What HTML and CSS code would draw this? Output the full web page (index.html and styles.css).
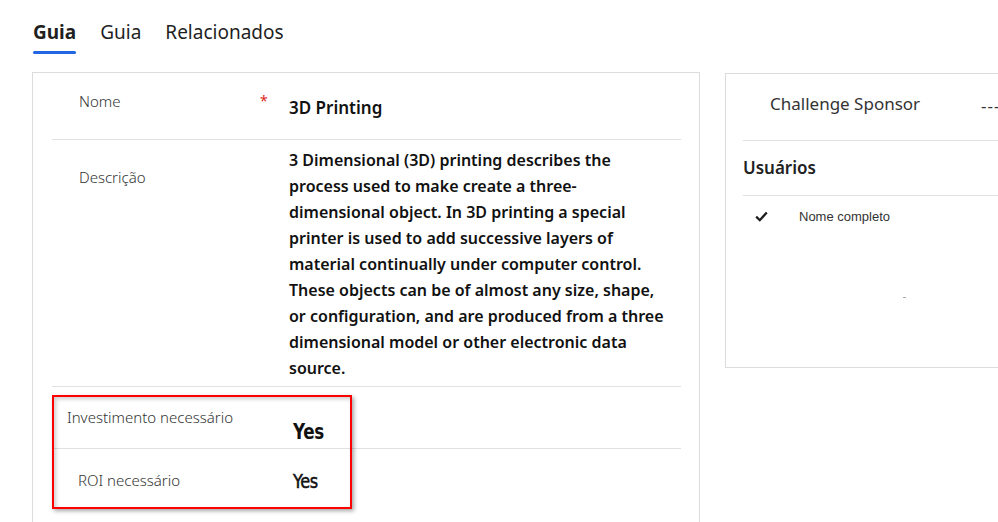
FILE: index.html
```html
<!DOCTYPE html>
<html lang="pt">
<head>
<meta charset="utf-8">
<title>Guia</title>
<link rel="stylesheet" href="styles.css">
</head>
<body>
<nav class="tabs">
  <a class="tab active">Guia</a>
  <a class="tab">Guia</a>
  <a class="tab">Relacionados</a>
</nav>
<main class="content">
  <section class="card main-card">
    <div class="row row-name">
      <div class="label">Nome</div>
      <div class="req">*</div>
      <div class="value name-value">3D Printing</div>
    </div>
    <div class="row row-desc">
      <div class="label desc-label">Descrição</div>
      <div class="req"></div>
      <div class="value desc-value">3 Dimensional (3D) printing describes the process used to make create a three-dimensional object. In 3D printing a special printer is used to add successive layers of material continually under computer control. These objects can be of almost any size, shape, or configuration, and are produced from a three dimensional model or other electronic data source.</div>
    </div>
    <div class="highlight-wrap">
      <div class="row row-inv">
        <div class="label label-inv">Investimento necessário</div>
        <div class="yes yes-bold">Yes</div>
      </div>
      <div class="row row-roi">
        <div class="label label-roi">ROI necessário</div>
        <div class="yes yes-med">Yes</div>
      </div>
      <div class="highlight"></div>
    </div>
  </section>
  <section class="card side-card">
    <div class="side-row sponsor">
      <div class="sponsor-label">Challenge Sponsor</div>
      <div class="sponsor-value">---</div>
    </div>
    <div class="side-row users-head">Usuários</div>
    <div class="users-list">
      <div class="user-col">
        <svg class="check" width="13" height="11" viewBox="0 0 13 11"><path d="M1.2 5.6 L4.8 9.2 L11.8 1.4" fill="none" stroke="#1b1b1b" stroke-width="2.2"/></svg>
        <span class="col-name">Nome completo</span>
      </div>
      <div class="dot"></div>
    </div>
  </section>
</main>
</body>
</html>
```

FILE: styles.css
```css
* { box-sizing: border-box; }
html, body { margin: 0; padding: 0; }
body {
  width: 998px;
  height: 522px;
  overflow: hidden;
  background: #fff;
  color: #1b1b1b;
  font-family: "Noto Sans", "Open Sans", sans-serif;
}
.tabs {
  display: flex;
  gap: 24px;
  padding: 18px 0 0 33px;
  height: 72px;
}
.tab {
  font-size: 19px;
  line-height: 28px;
  color: #1f1f1f;
  height: 36px;
  position: relative;
}
.tab.active { font-weight: 700; }
.tab.active::after {
  content: "";
  position: absolute;
  left: 0;
  right: 0;
  bottom: 0;
  height: 3px;
  border-radius: 2px;
  background: #2266e3;
}
.content {
  display: flex;
  align-items: flex-start;
  gap: 25px;
  padding-left: 32px;
}
.card {
  border: 1px solid #dcdcdc;
  background: #fff;
}
.main-card {
  width: 668px;
  height: 460px;
  flex: none;
  padding: 0 18px 0 19px;
}
.row {
  display: flex;
  border-bottom: 1px solid #e1e1e1;
}
.label {
  width: 208px;
  flex: none;
  padding-left: 27px;
  font-size: 15px;
  color: #333;
  font-weight: 300;
}
.req {
  width: 29px;
  flex: none;
  color: #e0281b;
  font-size: 14px;
}
.value { font-weight: 600; color: #111; }
.row-name { height: 67px; }
.row-name .label { padding-top: 18px; }
.row-name .req { padding-top: 18px; }
.name-value { font-size: 17px; padding-top: 23px; }
.row-desc { height: 247px; }
.desc-label { padding-top: 27px; }
.desc-value {
  width: 378px;
  flex: none;
  font-size: 16px;
  line-height: 26px;
  padding-top: 7px;
}
.highlight-wrap { position: relative; }
.row-inv { height: 62px; }
.label-inv { padding-left: 15px; padding-top: 20px; width: 241px; }
.row-roi { height: 62px; border-bottom: none; }
.label-roi { padding-left: 26px; padding-top: 21px; width: 241px; }
.yes {
  font-family: "DejaVu Sans", sans-serif;
  color: #111;
  letter-spacing: -0.5px;
  transform-origin: left;
}
.yes-bold { font-weight: 700; font-size: 21px; padding-top: 33px; transform: scaleX(0.8); }
.yes-med { font-weight: 400; font-size: 19px; padding-top: 21px; transform: scaleX(0.85); color: #111; -webkit-text-stroke: 0.5px #111; }
.highlight {
  position: absolute;
  left: 0;
  top: 8px;
  width: 300px;
  height: 114px;
  border: 2px solid #f00;
  box-shadow: 2px 2px 4px rgba(0,0,0,0.35), inset 2px 2px 4px rgba(0,0,0,0.2);
  pointer-events: none;
}
.side-card {
  width: 300px;
  height: 295px;
  flex: none;
  margin-top: 1px;
  padding-left: 17px;
}
.side-row { border-bottom: 1px solid #e1e1e1; }
.sponsor {
  display: flex;
  height: 67px;
  padding-top: 18px;
}
.sponsor-label {
  width: 238px;
  flex: none;
  padding-left: 27px;
  font-size: 17px;
  color: #333;
}
.sponsor-value { font-size: 17px; color: #333; letter-spacing: 1px; padding-top: 2px; white-space: nowrap; }
.users-head {
  height: 55px;
  padding-top: 15px;
  font-size: 17px;
  font-weight: 600;
  color: #222;
}
.users-list { position: relative; height: 170px; }
.user-col {
  display: flex;
  align-items: center;
  height: 41px;
  padding-left: 12px;
}
.check { margin-right: 31px; }
.col-name {
  font-family: "Liberation Sans", Arial, sans-serif;
  font-size: 13px;
  color: #333;
}
.dot {
  position: absolute;
  left: 160px;
  top: 101px;
  width: 3px;
  height: 1px;
  background: #aaa;
}
```
